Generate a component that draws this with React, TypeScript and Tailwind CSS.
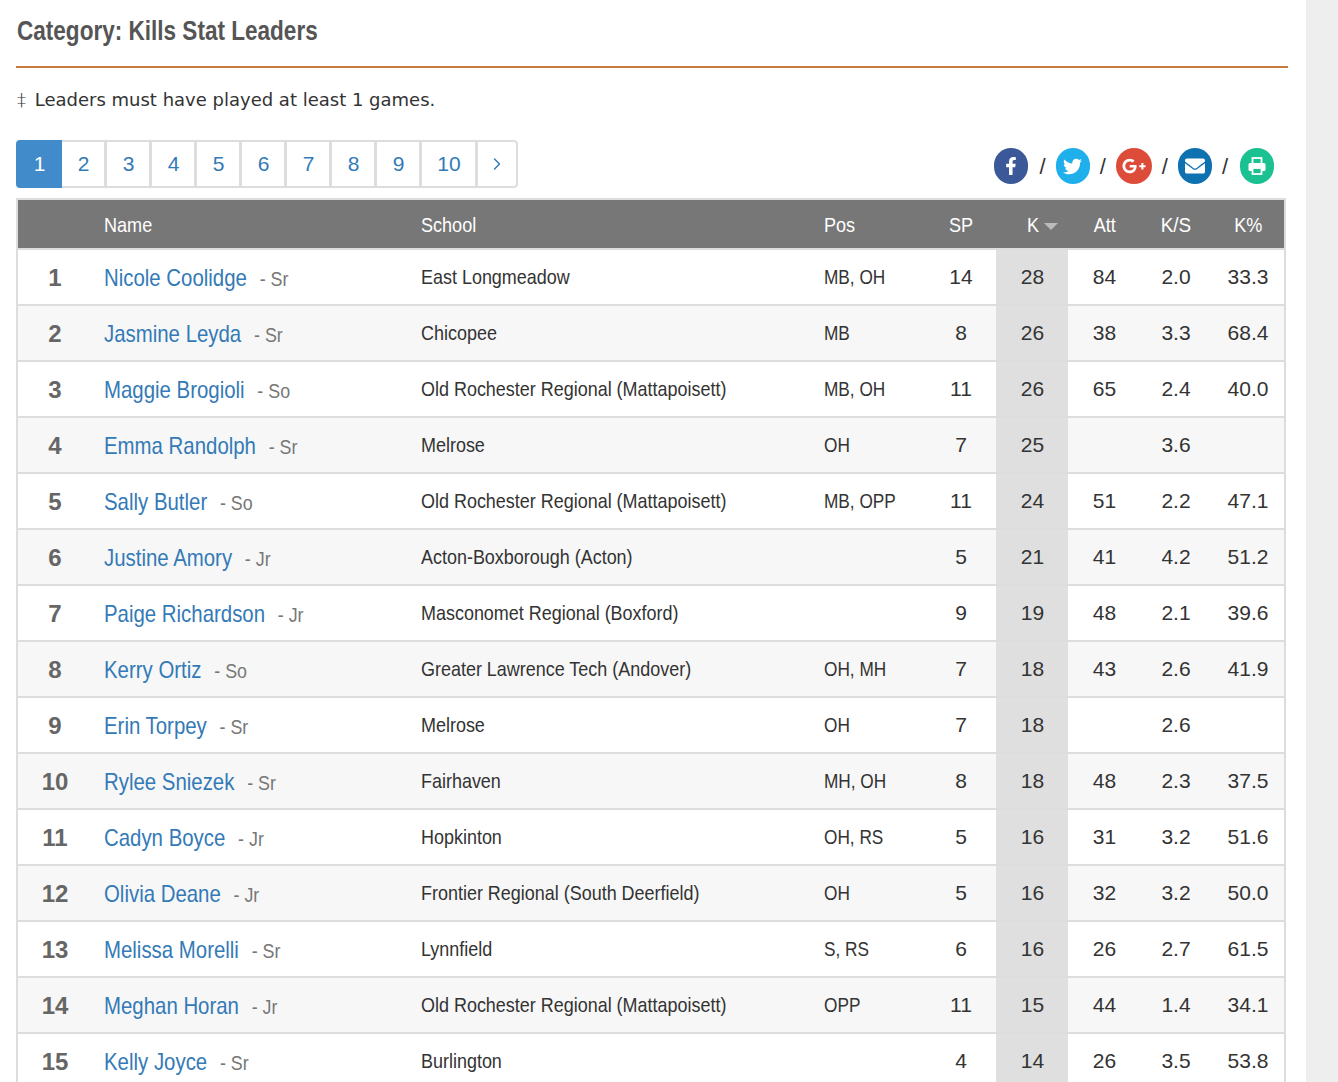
import { ChevronRight } from "lucide-react";
import { FaEnvelope, FaFacebookF, FaGooglePlusG, FaTwitter } from "react-icons/fa";

const players = [
  ["Nicole Coolidge", "Sr", "East Longmeadow", "MB, OH", "14", "28", "84", "2.0", "33.3"],
  ["Jasmine Leyda", "Sr", "Chicopee", "MB", "8", "26", "38", "3.3", "68.4"],
  ["Maggie Brogioli", "So", "Old Rochester Regional (Mattapoisett)", "MB, OH", "11", "26", "65", "2.4", "40.0"],
  ["Emma Randolph", "Sr", "Melrose", "OH", "7", "25", "", "3.6", ""],
  ["Sally Butler", "So", "Old Rochester Regional (Mattapoisett)", "MB, OPP", "11", "24", "51", "2.2", "47.1"],
  ["Justine Amory", "Jr", "Acton-Boxborough (Acton)", "", "5", "21", "41", "4.2", "51.2"],
  ["Paige Richardson", "Jr", "Masconomet Regional (Boxford)", "", "9", "19", "48", "2.1", "39.6"],
  ["Kerry Ortiz", "So", "Greater Lawrence Tech (Andover)", "OH, MH", "7", "18", "43", "2.6", "41.9"],
  ["Erin Torpey", "Sr", "Melrose", "OH", "7", "18", "", "2.6", ""],
  ["Rylee Sniezek", "Sr", "Fairhaven", "MH, OH", "8", "18", "48", "2.3", "37.5"],
  ["Cadyn Boyce", "Jr", "Hopkinton", "OH, RS", "5", "16", "31", "3.2", "51.6"],
  ["Olivia Deane", "Jr", "Frontier Regional (South Deerfield)", "OH", "5", "16", "32", "3.2", "50.0"],
  ["Melissa Morelli", "Sr", "Lynnfield", "S, RS", "6", "16", "26", "2.7", "61.5"],
  ["Meghan Horan", "Jr", "Old Rochester Regional (Mattapoisett)", "OPP", "11", "15", "44", "1.4", "34.1"],
  ["Kelly Joyce", "Sr", "Burlington", "", "4", "14", "26", "3.5", "53.8"],
];

const pages = ["2", "3", "4", "5", "6", "7", "8", "9", "10"];

function PrintIcon() {
  return (
    <svg width="20" height="20" viewBox="0 0 20 20" aria-hidden="true">
      <rect x="5.5" y="2" width="9" height="6" fill="none" stroke="white" strokeWidth="1.8" />
      <rect x="1.5" y="7" width="17" height="8" rx="1.5" fill="white" />
      <rect x="5.5" y="12" width="9" height="6" fill="#1cc192" stroke="white" strokeWidth="1.8" />
    </svg>
  );
}

export default function App() {
  return (
    <div className="flex h-[1082px] overflow-hidden bg-white font-['Liberation_Sans',sans-serif]">
      <main className="w-[1306px] shrink-0 pl-4 pr-[18px]">
        <div className="h-[68px] border-b-2 border-[#c87a3c] pt-[14px]">
          <h1 className="ml-px origin-left scale-x-[0.835] whitespace-nowrap text-[27px] leading-[34px] font-bold text-[#555]">
            Category: Kills Stat Leaders
          </h1>
        </div>
        <p className="mt-[20px] pl-px font-['DejaVu_Sans',sans-serif] text-[18px] leading-6 text-[#333]">
          <span className="mr-[3px] font-light">‡</span> Leaders must have played at least 1 games.
        </p>

        <div className="mt-[28px] flex items-start justify-between pr-[14px]">
          <nav className="flex h-12 text-[21px] text-[#337ab7]">
            <span className="flex w-[46px] items-center justify-center rounded-l bg-[#428bca] pb-px pl-px text-white">1</span>
            {pages.map((page) => (
              <a key={page} className={`flex items-center justify-center border-y-[2px] border-r-[3px] border-[#ddd] pb-px pl-px ${page === "10" ? "w-[56px]" : "w-[45px]"}`}>
                {page}
              </a>
            ))}
            <a className="flex w-[40px] items-center justify-center rounded-r border-y-[2px] border-r-[2px] border-[#ddd]">
              <ChevronRight size={20} strokeWidth={1.75} />
            </a>
          </nav>
          <div className="mt-2 flex items-center gap-[10px] text-[22px] text-[#333]">
            <span className="mr-[2px] flex h-9 w-[34px] items-center justify-center rounded-full bg-[#3b5998] text-[18px] text-white"><FaFacebookF /></span>
            <span>/</span>
            <span className="flex h-9 w-[34px] items-center justify-center rounded-full bg-[#1fb0ec] text-[19px] text-white"><FaTwitter /></span>
            <span>/</span>
            <span className="flex h-9 w-9 items-center justify-center rounded-full bg-[#dd4b39] text-[24px] text-white"><FaGooglePlusG /></span>
            <span>/</span>
            <span className="flex h-9 w-[34px] items-center justify-center rounded-full bg-[#0e71b0] text-[20px] text-white"><FaEnvelope /></span>
            <span>/</span>
            <span className="ml-[2px] flex h-9 w-[34px] items-center justify-center rounded-full bg-[#1cc192]"><PrintIcon /></span>
          </div>
        </div>

        <table className="mt-[10px] w-[1270px] table-fixed border-separate border-spacing-0 border-x-2 border-t-2 border-[#ddd] text-[21px] text-[#333]">
          <colgroup>
            <col className="w-[74px]" />
            <col className="w-[317px]" />
            <col className="w-[403px]" />
            <col className="w-[113px]" />
            <col className="w-[71px]" />
            <col className="w-[72px]" />
            <col className="w-[72px]" />
            <col className="w-[72px]" />
            <col className="w-[72px]" />
          </colgroup>
          <thead>
            <tr className="h-12 bg-[#777] text-left text-[21px] text-white">
              <th></th>
              <th className="pt-px pl-3 font-normal"><span className="inline-block origin-left scale-x-[0.86]">Name</span></th>
              <th className="pt-px pl-3 font-normal"><span className="inline-block origin-left scale-x-[0.86]">School</span></th>
              <th className="pt-px pl-3 font-normal"><span className="inline-block origin-left scale-x-[0.86]">Pos</span></th>
              <th className="pt-px pl-px text-center font-normal"><span className="inline-block scale-x-[0.86]">SP</span></th>
              <th className="pt-px pl-5 text-center font-normal">
                <span className="inline-block scale-x-[0.86]">K</span>
                <span className="ml-1 inline-block h-0 w-0 border-x-[7px] border-t-[7px] border-x-transparent border-t-[#bbb] align-middle"></span>
              </th>
              <th className="pt-px pl-px text-center font-normal"><span className="inline-block scale-x-[0.86]">Att</span></th>
              <th className="pt-px text-center font-normal"><span className="inline-block scale-x-[0.9]">K/S</span></th>
              <th className="pt-px text-center font-normal"><span className="inline-block scale-x-[0.86]">K%</span></th>
            </tr>
          </thead>
          <tbody>
            {players.map((p, i) => (
              <tr key={p[0]} className={`h-14 ${i % 2 ? "bg-[#f7f7f7]" : "bg-white"}`}>
                <td className="border-t-2 border-[#ddd] pt-px text-center text-[24px] font-bold text-[#666]">{i + 1}</td>
                <td className="border-t-2 border-[#ddd] pt-[2px] pl-3 text-[24px] whitespace-nowrap text-[#337ab7]">
                  <span className="inline-block origin-left scale-x-[0.85]">
                    {p[0]}
                    <span className="ml-[15px] text-[21px] text-[#777]">- {p[1]}</span>
                  </span>
                </td>
                <td className="border-t-2 border-[#ddd] pl-3 whitespace-nowrap"><span className="inline-block origin-left scale-x-[0.855]">{p[2]}</span></td>
                <td className="border-t-2 border-[#ddd] pl-3 whitespace-nowrap"><span className="inline-block origin-left scale-x-[0.82]">{p[3]}</span></td>
                <td className="border-t-2 border-[#ddd] pl-px text-center">{p[4]}</td>
                <td className="border-t-2 border-[#ddd] bg-[#dfdfdf] pl-px text-center">{p[5]}</td>
                <td className="border-t-2 border-[#ddd] pl-px text-center">{p[6]}</td>
                <td className="border-t-2 border-[#ddd] text-center">{p[7]}</td>
                <td className="border-t-2 border-[#ddd] text-center">{p[8]}</td>
              </tr>
            ))}
          </tbody>
        </table>
      </main>
      <aside className="flex-1 bg-[#eee]"></aside>
    </div>
  );
}
